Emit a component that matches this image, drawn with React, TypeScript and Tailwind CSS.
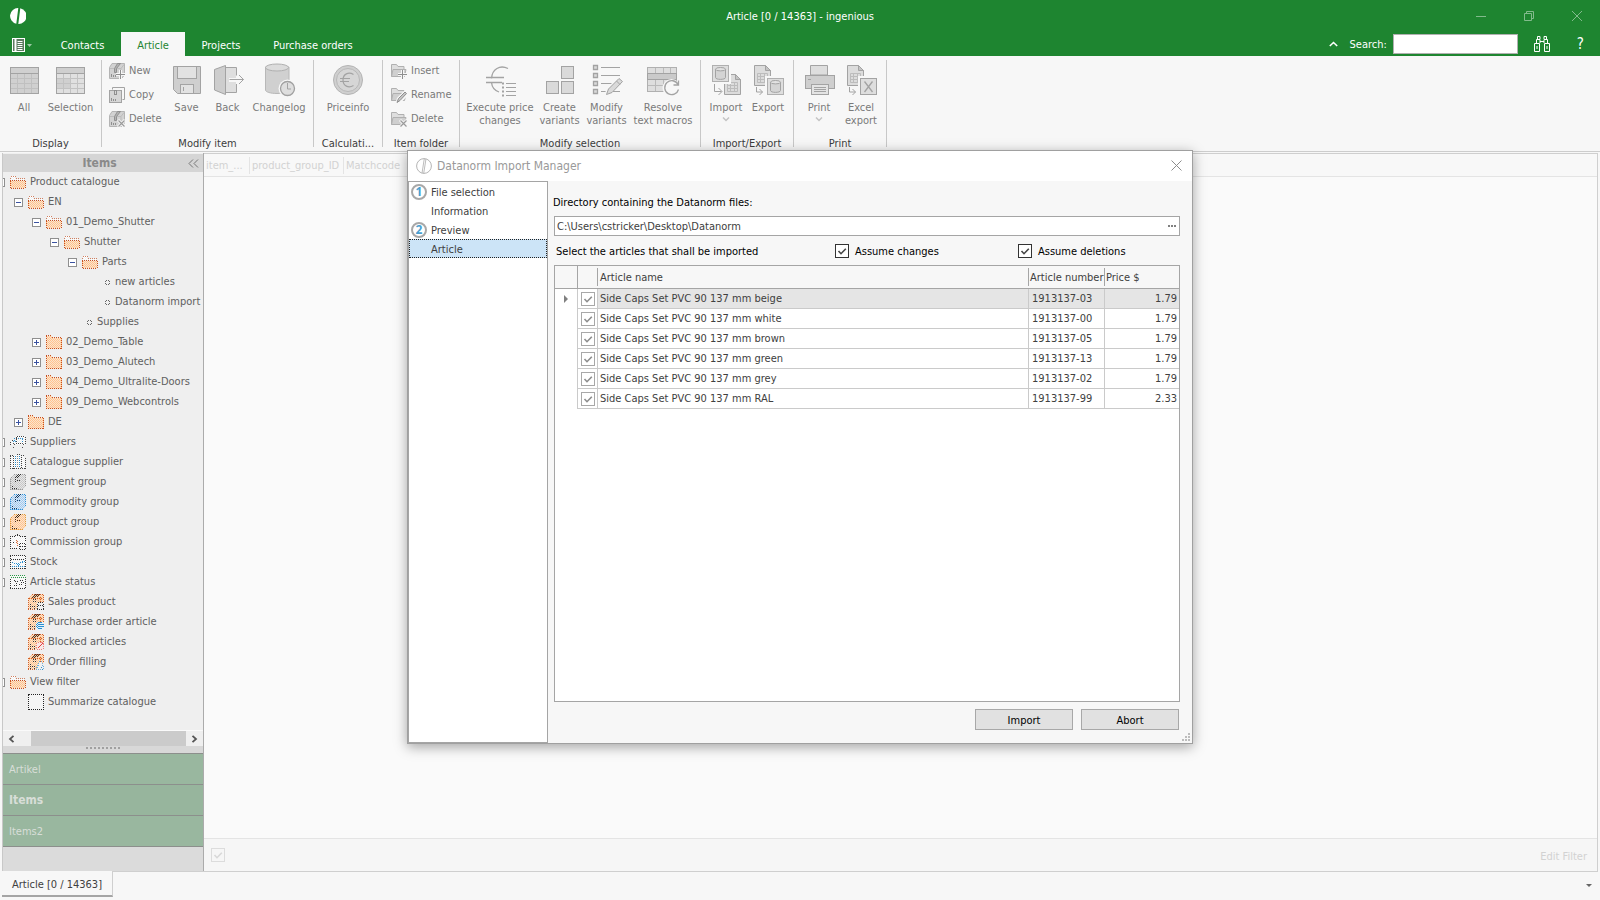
import { useState } from 'react';
import type { ReactNode } from 'react';

type TreeNode = {
  label: string;
  level: number;
  icon: string;
  toggle?: 'open' | 'closed';
};

const tree: TreeNode[] = [
  { label: 'Product catalogue', level: 0, icon: 'folderOpen', toggle: 'open' },
  { label: 'EN', level: 1, icon: 'folderOpen', toggle: 'open' },
  { label: '01_Demo_Shutter', level: 2, icon: 'folderOpen', toggle: 'open' },
  { label: 'Shutter', level: 3, icon: 'folderOpen', toggle: 'open' },
  { label: 'Parts', level: 4, icon: 'folderOpen', toggle: 'open' },
  { label: 'new articles', level: 5, icon: 'dot' },
  { label: 'Datanorm import', level: 5, icon: 'dot' },
  { label: 'Supplies', level: 4, icon: 'dot' },
  { label: '02_Demo_Table', level: 2, icon: 'folder', toggle: 'closed' },
  { label: '03_Demo_Alutech', level: 2, icon: 'folder', toggle: 'closed' },
  { label: '04_Demo_Ultralite-Doors', level: 2, icon: 'folder', toggle: 'closed' },
  { label: '09_Demo_Webcontrols', level: 2, icon: 'folder', toggle: 'closed' },
  { label: 'DE', level: 1, icon: 'folder', toggle: 'closed' },
  { label: 'Suppliers', level: 0, icon: 'truck', toggle: 'closed' },
  { label: 'Catalogue supplier', level: 0, icon: 'books', toggle: 'closed' },
  { label: 'Segment group', level: 0, icon: 'boxGray', toggle: 'closed' },
  { label: 'Commodity group', level: 0, icon: 'boxBlue', toggle: 'closed' },
  { label: 'Product group', level: 0, icon: 'boxOrange', toggle: 'closed' },
  { label: 'Commission group', level: 0, icon: 'clipboard', toggle: 'closed' },
  { label: 'Stock', level: 0, icon: 'stock', toggle: 'closed' },
  { label: 'Article status', level: 0, icon: 'status', toggle: 'closed' },
  { label: 'Sales product', level: 1, icon: 'boxSales' },
  { label: 'Purchase order article', level: 1, icon: 'boxGlobe' },
  { label: 'Blocked articles', level: 1, icon: 'boxBlocked' },
  { label: 'Order filling', level: 1, icon: 'boxPerson' },
  { label: 'View filter', level: 0, icon: 'folderOpen', toggle: 'open' },
  { label: 'Summarize catalogue', level: 1, icon: 'check' },
];

const articles = [
  { name: 'Side Caps Set PVC 90 137 mm beige', number: '1913137-03', price: '1.79' },
  { name: 'Side Caps Set PVC 90 137 mm white', number: '1913137-00', price: '1.79' },
  { name: 'Side Caps Set PVC 90 137 mm brown', number: '1913137-05', price: '1.79' },
  { name: 'Side Caps Set PVC 90 137 mm green', number: '1913137-13', price: '1.79' },
  { name: 'Side Caps Set PVC 90 137 mm grey', number: '1913137-02', price: '1.79' },
  { name: 'Side Caps Set PVC 90 137 mm RAL', number: '1913137-99', price: '2.33' },
];

/* ---------- icons ---------- */

const Big = ({ children }: { children: ReactNode }) => (
  <svg width="32" height="32" viewBox="0 0 32 32" fill="#dadada" stroke="#a3a3a3" className="overflow-visible">
    {children}
  </svg>
);

const Small = ({ children }: { children: ReactNode }) => (
  <svg width="16" height="16" viewBox="0 0 16 16" fill="#d6d6d6" stroke="#a3a3a3" className="shrink-0 overflow-visible">
    {children}
  </svg>
);

const AllIcon = () => (
  <Big>
    <rect x="2.5" y="3.5" width="28" height="26" fill="#d0d0d0" />
    <path d="M2.5 9.5h28" />
    <path d="M9.5 10v19M16.5 10v19M23.5 10v19M3 14.5h27M3 19.5h27M3 24.5h27" stroke="#c0c0c0" />
  </Big>
);

const SelectionIcon = () => (
  <Big>
    <rect x="1.5" y="3.5" width="28" height="26" fill="#e0e0e0" />
    <rect x="1.5" y="3.5" width="28" height="6" fill="#cfcfcf" />
    <rect x="2" y="15" width="13" height="9" fill="#d0d0d0" stroke="none" />
    <path d="M8.5 10v19M15.5 10v19M22.5 10v19M2 14.5h27M2 19.5h27M2 24.5h27" stroke="#c2c2c2" />
  </Big>
);

const SaveIcon = () => (
  <Big>
    <path d="M2.5 2.5h27v27H6.5l-4-4z" fill="#cfcfcf" />
    <rect x="6.5" y="2.5" width="19" height="12" fill="#e2e2e2" />
    <rect x="9.5" y="20.5" width="13" height="9" fill="#e2e2e2" />
    <path d="M12.5 23v4" />
  </Big>
);

const BackIcon = () => (
  <Big>
    <path d="M14 4h10v24H14z" fill="#dedede" stroke="none" />
    <path d="M14 3.5h10.500v8M24.500 20v8.500H14" fill="none" />
    <path d="M2.500 5.500L13.500 1.500v29L2.500 26z" fill="#cdcdcd" />
    <path d="M17 16h14" stroke="#f7f7f7" strokeWidth="4" />
    <path d="M17.500 15.500h14M27 11l4.500 4.500L27 20" fill="none" />
  </Big>
);

const ChangelogIcon = () => (
  <Big>
    <path d="M2.5 3v23c0 2 5 3.500 11.500 3.500s12-1.500 12-3.500V3z" fill="#d0d0d0" stroke="#b8b8b8" />
    <ellipse cx="14" cy="3.500" rx="11.500" ry="3.500" fill="#dcdcdc" stroke="#b0b0b0" />
    <circle cx="24.500" cy="24.500" r="9" fill="#f7f7f7" stroke="none" />
    <circle cx="24.500" cy="24.500" r="7" fill="#dedede" stroke="#a0a0a0" strokeWidth="1.300" />
    <path d="M24.500 19v6h3.500" fill="none" />
  </Big>
);

const PriceIcon = () => (
  <Big>
    <circle cx="16" cy="16" r="14.500" fill="#cfcfcf" stroke="#b4b4b4" />
    <circle cx="16" cy="16" r="11.500" fill="#d6d6d6" stroke="#b8b8b8" />
    <path d="M21.500 10.500c-5-3-10.500-.5-10.500 5.500s5.500 8.500 10.500 5.500M8 14.500h10M8 17.500h9" fill="none" strokeWidth="1.200" />
  </Big>
);

const ExecuteIcon = () => (
  <Big>
    <path d="M24 4.500C16 .5 8 5 7.500 14.500M2 13.500h18M2 18.500h16M7.500 18.500c.5 5 3 8 7.500 9.500" fill="none" strokeWidth="1.300" />
    <path d="M18 19.500h2M18 23.500h2M18 27.500h2M18 31.500h2" strokeWidth="2" />
    <path d="M22 19.500h10M22 23.500h10M22 27.500h10M22 31.500h10" />
  </Big>
);

const CreateIcon = () => (
  <Big>
    <rect x="17.500" y="2.500" width="12" height="12" />
    <rect x="2.500" y="17.500" width="12" height="12" />
    <rect x="17.500" y="17.500" width="12" height="12" />
  </Big>
);

const ModifyIcon = () => (
  <Big>
    <path d="M2.500 1.500h4v4h-4zM2.500 9.500h4v4h-4zM2.500 17.500h4v4h-4zM2.500 25.500h4v4h-4z" strokeWidth="1.300" />
    <path d="M10 3.500h19M10 11.500h19M10 19.500h13M10 27.500h6" />
    <path d="M15 31l2-6L28 14l4 4-11.500 11z" fill="#cfcfcf" stroke="#f7f7f7" strokeWidth="3" />
    <path d="M15.500 30.500l2-5.500L28 14.500l3.500 3L21 28.500zM25.500 17l3.500 3.500" />
    <path d="M22 27.500h7" />
  </Big>
);

const ResolveIcon = () => (
  <Big>
    <rect x=".5" y="3.500" width="29" height="24" fill="#dedede" stroke="#b0b0b0" />
    <path d="M8.500 4v23M16.500 4v23M23.500 4v23M1 21.500h28" stroke="#bababa" />
    <rect x=".5" y="9.500" width="29" height="6" fill="#cacaca" />
    <circle cx="24.500" cy="24" r="9" fill="#f7f7f7" stroke="none" />
    <path d="M31 20.500a7 7 0 1 0 .5 5M31.500 16.500v4.500h-5" fill="none" strokeWidth="1.300" />
  </Big>
);

const Db = ({ x, y }: { x: number; y: number }) => (
  <g transform={`translate(${x} ${y})`}>
    <rect x=".5" y=".5" width="16" height="16" fill="#dedede" stroke="#b0b0b0" />
    <path d="M3.500 4v8.500c0 2.500 10 2.500 10 0V4" fill="#d4d4d4" />
    <ellipse cx="8.500" cy="4.200" rx="5" ry="1.700" fill="#e2e2e2" />
  </g>
);

const Sheet = ({ x, y }: { x: number; y: number }) => (
  <g transform={`translate(${x} ${y})`}>
    <path d="M.5.500h11l5 5v15H.500z" fill="#dcdcdc" />
    <path d="M11.500.5v5h5z" fill="#c4c4c4" />
    <path d="M3.500 8.500h10v9h-10zM3.500 11.500h10M3.500 14.500h10M6.500 8.500v9M10.500 8.500v9" fill="none" stroke="#bcbcbc" />
  </g>
);

const ImportIcon = () => (
  <Big>
    <Sheet x={14} y={10} />
    <rect x="1" y="0" width="20" height="20" fill="#f7f7f7" stroke="none" />
    <Db x={2} y={1} />
    <path d="M4.500 20v7.500h7M8.500 24l3.500 3.500L8.500 31" fill="none" />
  </Big>
);

const ExportIcon = () => (
  <Big>
    <Sheet x={2} y={1} />
    <rect x="13" y="12" width="19" height="20" fill="#f7f7f7" stroke="none" />
    <Db x={15} y={14} />
    <path d="M4.500 23v5h6M7.500 25l3 3-3 3" fill="none" />
  </Big>
);

const PrintIcon = () => (
  <Big>
    <path d="M7.500 11V1.500h17V11z" fill="#dedede" />
    <rect x="2.500" y="11.500" width="29" height="13" fill="#cfcfcf" />
    <rect x="8.500" y="20.500" width="17" height="10" fill="#e4e4e4" />
    <path d="M11 23.500h12M11 25.500h12M11 27.500h12M5 15.500h3" />
  </Big>
);

const ExcelIcon = () => (
  <Big>
    <Sheet x={2} y={1} />
    <rect x="13" y="12" width="19" height="20" fill="#f7f7f7" stroke="none" />
    <rect x="15.500" y="14.500" width="16" height="16" fill="#dedede" />
    <path d="M19.500 17.500l8 10.500M27.500 17.500l-8 10.500" strokeWidth="1.300" />
    <path d="M4.500 23v5h6M7.500 25l3 3-3 3" fill="none" />
  </Big>
);

const PackagePlain = () => (
  <>
    <path d="M.5 15.500V4.500l2.500-4h12.500V12l-3 3.500z" fill="#d2d2d2" stroke="#b4b4b4" />
    <path d="M1 5.500h11V15M12 5.500l3-4" fill="none" stroke="#bcbcbc" />
    <path d="M5.500 5.500v4h2v-4l4-5h-3z" fill="#b4b4b4" stroke="#909090" />
    <path d="M2.500 11v3M4.500 12v2M6.500 12v2" stroke="#8f8f8f" />
  </>
);

const NewIcon = () => (
  <Small>
    <PackagePlain />
    <path d="M7 11.500h9M11.500 7v9" stroke="#f7f7f7" strokeWidth="3" />
    <path d="M7 11.500h9M11.500 7v9" stroke="#8f8f8f" />
  </Small>
);

const CopyIcon = () => (
  <Small>
    <path d="M3.500 2.500V.500h12v12h-2" fill="none" />
    <rect x=".5" y="3.500" width="12" height="12" />
    <rect x="5.500" y="3.500" width="2" height="4" stroke="#8f8f8f" />
    <path d="M2.500 11v3M4.500 12v2M6.500 12v2" stroke="#8f8f8f" />
  </Small>
);

const DeleteIcon = () => (
  <Small>
    <PackagePlain />
    <path d="M9 9l7 7M16 9l-7 7" stroke="#f7f7f7" strokeWidth="3" />
    <path d="M9.500 9.500l6 6M15.500 9.500l-6 6" stroke="#9a9a9a" strokeWidth="1.200" />
  </Small>
);

const FolderShape = () => (
  <>
    <path d="M.5 13.500V1.500h5l1.500 2h6v3" fill="#dedede" stroke="#b0b0b0" />
    <path d="M.5 13.500l1.500-7h13l-1.500 7z" fill="#cfcfcf" stroke="#b0b0b0" />
  </>
);

const FolderInsert = () => (
  <Small>
    <FolderShape />
    <path d="M7 11.500h9M11.500 7v9" stroke="#f7f7f7" strokeWidth="3" />
    <path d="M7 11.500h9M11.500 7v9" stroke="#8f8f8f" />
  </Small>
);

const FolderRename = () => (
  <Small>
    <FolderShape />
    <path d="M6 15.500l1.500-4 6.500-6.500 2 2-6.500 7z" stroke="#f7f7f7" strokeWidth="3" />
    <path d="M6 15.500l1.500-4 6.500-6.500 1.500 1.500-6.500 7z" fill="#c4c4c4" stroke="#8f8f8f" />
  </Small>
);

const FolderDelete = () => (
  <Small>
    <FolderShape />
    <path d="M9 9l7 7M16 9l-7 7" stroke="#f7f7f7" strokeWidth="3" />
    <path d="M9.500 9.500l6 6M15.500 9.500l-6 6" stroke="#9a9a9a" strokeWidth="1.200" />
  </Small>
);

const Logo = () => (
  <svg width="16" height="16" viewBox="0 0 16 16" fill="#fff" className="shrink-0">
    <path d="M8.300 0A8 8 0 0 0 6.300 15.800z" />
    <path d="M7.700 16A8 8 0 0 0 9.700 .200z" transform="translate(.6 0)" />
  </svg>
);

const LogoOutline = () => (
  <svg width="16" height="16" viewBox="0 0 16 16" fill="none" stroke="#b4b4b4" className="shrink-0">
    <circle cx="8" cy="8" r="7.400" />
    <path d="M8.300 .6L6 15.200M10 .8L7.700 15.400" strokeWidth=".9" />
  </svg>
);

// dithered fills shared by the tree icons
const Patterns = () => (
  <svg width="0" height="0" className="absolute" aria-hidden="true">
    <defs>
      {[
        ['orange', '#ffc490', '#fbe3cd'],
        ['blue', '#a0c8ee', '#dce9f5'],
        ['gray', '#c8c8c8', '#e6e6e6'],
        ['white', '#ffffff', '#f0f0f0'],
      ].map(([id, color, base]) => (
        <pattern key={id} id={`d-${id}`} width="2" height="2" patternUnits="userSpaceOnUse">
          <path d="M0 0h2v2H0z" fill={base} />
          <path d="M0 0h1v1H0zM1 1h1v1H1z" fill={color} />
        </pattern>
      ))}
    </defs>
  </svg>
);

const Package = ({ stroke, fill, dark }: { stroke: string; fill: string; dark: string }) => (
  <>
    <path d="M0 4l4-4h12v12l-3 4H0z" fill={fill} stroke="none" />
    <path d="M.5 5v11M2 15.500h11M4 .5h12M15.500 1v12M1 3.500h2" stroke={stroke} />
    <path d="M8 .5h3M7 1.500h3M6 2.500h3M5 3.500h3M5.500 5v3M7 6.500h3M2 12.500h2M2 14.500h6" stroke={dark} />
  </>
);

const SmallPackage = ({ children }: { children: ReactNode }) => (
  <>
    <path d="M0 4l4-4h12v8l-5 7H0z" fill="url(#d-orange)" stroke="none" />
    <path d="M.5 4v12M0 15.500h8M4 .5h12M15.500 1v8M1 4.500h13M12.500 3v5" stroke="#d0602a" />
    <path d="M7 .5h5M6 1.500h5M5 2.500h5M4 3.500h3M5.500 5v3M7.500 5v3M2.500 10v5M4 12.500h3M6 14.500h2" stroke="#3f3530" />
    {children}
  </>
);

const treeIcons: Record<string, ReactNode> = {
  folderOpen: (
    <>
      <path d="M1 6V2h4v2h9v2z" fill="url(#d-white)" stroke="none" />
      <path d="M1 2.500h5M6 4.500h8M.5 4v2M14.500 4v2" stroke="#d08060" />
      <path d="M0 7h16l-1 7H1z" fill="url(#d-orange)" stroke="none" />
      <path d="M0 6.500h16M1 14.500h14M.5 7v7M15.500 7v7" stroke="#c8501e" />
    </>
  ),
  folder: (
    <>
      <path d="M0 2h6v2h10v11H0z" fill="url(#d-orange)" stroke="none" />
      <path d="M0 1.500h6M6 3.500h10M.5 2v12M15.500 4v11M0 14.500h16" stroke="#c8501e" />
    </>
  ),
  truck: (
    <>
      <path d="M6 2h9v9H6zM1 6h5v5H1z" fill="url(#d-white)" stroke="none" />
      <path d="M7 2.500h8M15.500 3v8M6.500 3v6M4 4.500h3M2 6.500h2M.5 8v3M6 9.500h8" stroke="#444" />
      <path d="M8 4.500h6M12.500 5v3M3 7.500h3M4.500 4v4" stroke="#2a90d0" />
      <path d="M1.500 11.500l2-2 2 2-2 2zM10.500 11.500l2-2 2 2-2 2z" stroke="#555" />
    </>
  ),
  books: (
    <>
      <path d="M0 2h5V1h6l4 2v12H0z" fill="url(#d-white)" stroke="none" />
      <path d="M.5 2v13M3.500 2v13M11.500 1v14M15.500 4v11M0 1.500h4M11 1.500h3M0 14.500h15M7 .5h4" stroke="#444" />
      <path d="M5.500 2v12M9.500 2v12" stroke="#2a90d0" />
      <path d="M7.500 2v12" stroke="#888" />
    </>
  ),
  boxGray: <Package stroke="#999" fill="url(#d-gray)" dark="#333" />,
  boxBlue: <Package stroke="#2a90d8" fill="url(#d-blue)" dark="#123a66" />,
  boxOrange: <Package stroke="#dc9a3c" fill="url(#d-orange)" dark="#4a2a10" />,
  clipboard: (
    <>
      <path d="M0 2h16v13H0z" fill="url(#d-white)" stroke="none" />
      <path d="M.5 2v13M15.500 2v6M0 2.500h5M10 2.500h6M5 1.500h6M7 .5h2M0 14.500h8M3 8.500h2" stroke="#333" />
      <path d="M6.500 6v4M7.500 7v5" stroke="#e0703a" />
      <path d="M10 9.500h5M9.500 10v6M15.500 10v6M10 12.500h5M10 15.500h5" stroke="#333" />
    </>
  ),
  stock: (
    <>
      <path d="M0 2h16v13H0z" fill="url(#d-white)" stroke="none" />
      <path d="M0 1.500h16M0 14.500h16M.5 2v13M15.500 2v13M1 5.500h14" stroke="#333" />
      <path d="M2 8.500h2M4 9.500h3M7 10.500h3M10 8.500h3M12 7.500h3M2 12.500h13M8.500 9v4" stroke="#2a90d0" />
    </>
  ),
  status: (
    <>
      <path d="M0 2h16v13H0z" fill="url(#d-white)" stroke="none" />
      <path d="M0 14.500h16M.5 5v10M15.500 5v10M4 6.500h2M5 7.500h3M6 9.500h2M4 11.500h3M10 6.500h3M11 8.500h3M9 10.500h4" stroke="#333" />
      <path d="M0 1.500h16M1 3.500h15" stroke="#2a9a48" />
    </>
  ),
  boxSales: (
    <SmallPackage>
      <path d="M9 9h7v7H9z" fill="#f0f0f0" stroke="none" />
      <path d="M10 8.500h5M9.500 10v6M15.500 10v6M10 11.500h5M9 15.500h7" stroke="#333" />
    </SmallPackage>
  ),
  boxGlobe: (
    <SmallPackage>
      <circle cx="12" cy="12" r="4.500" fill="#e4f1fa" stroke="none" />
      <path d="M10 8.500h4M8 10.500h8M8 12.500h8M10 14.500h4M9.500 9v6M11.500 8v8M13.500 8v8M15.500 10v4" stroke="#2a90d0" />
    </SmallPackage>
  ),
  boxBlocked: (
    <SmallPackage>
      <circle cx="12" cy="12" r="4" fill="#f8e8e6" stroke="#f08080" />
      <path d="M9.500 14.500l5-5" stroke="#e04040" strokeDasharray="none" />
    </SmallPackage>
  ),
  boxPerson: (
    <SmallPackage>
      <path d="M8 15.500l2.500-5 1-3h2l1 3 1.500 5z" fill="#f0f0f0" stroke="#6ab0dc" />
      <path d="M13 13.500h2M14 15.500h2" stroke="#2a90d0" />
    </SmallPackage>
  ),
};

const TreeIcon = ({ name }: { name: string }) => (
  <svg
    width="16"
    height="16"
    viewBox="0 0 16 16"
    fill="none"
    strokeDasharray="1 1"
    shapeRendering="crispEdges"
    className="shrink-0"
  >
    {treeIcons[name]}
  </svg>
);

const LeafDot = () => (
  <svg width="5" height="5" viewBox="0 0 5 5" fill="#666" shapeRendering="crispEdges" className="mx-[5px] shrink-0">
    <path d="M1 0h1v1H1zM3 0h1v1H3zM0 1h1v1H0zM4 1h1v1H4zM0 3h1v1H0zM4 3h1v1H4zM1 4h1v1H1zM3 4h1v1H3z" />
  </svg>
);

const Tick = ({ className }: { className: string }) => (
  <svg viewBox="0 0 14 14" fill="none" strokeWidth="1.600" className={`pointer-events-none absolute inset-0 ${className}`}>
    <path d="M3.500 7l2.500 2.700 4.800-5" />
  </svg>
);

/* ---------- controls ---------- */

type CheckBoxProps = {
  id: string;
  label?: string;
  box: string;
  tick: string;
  disabled?: boolean;
};

const CheckBox = ({ id, label, box, tick, disabled }: CheckBoxProps) => {
  const [checked, setChecked] = useState(true);
  return (
    <span className="relative block size-3.5 shrink-0">
      <input
        type="checkbox"
        id={id}
        aria-label={label}
        checked={checked}
        disabled={disabled}
        onChange={(e) => setChecked(e.target.checked)}
        className={`block size-3.5 appearance-none border ${box}`}
      />
      {checked && <Tick className={tick} />}
    </span>
  );
};

const BigButton = ({ icon, lines, width, arrow }: { icon: ReactNode; lines: string[]; width: string; arrow?: boolean }) => (
  <button className={`flex flex-col items-center whitespace-nowrap pt-2 leading-[13px] text-[#7a7a7a] ${width}`}>
    {icon}
    <span className="mt-[5px]">
      {lines.map((line) => (
        <span key={line} className="block">{line}</span>
      ))}
    </span>
    {arrow && (
      <svg width="8" height="5" viewBox="0 0 8 5" fill="none" stroke="#c4c4c4" strokeWidth="1.500" className="mt-[3px]">
        <path d="M1 .5l3 3 3-3" />
      </svg>
    )}
  </button>
);

const SmallButton = ({ icon, label }: { icon: ReactNode; label: string }) => (
  <button className="flex h-6 items-center gap-1 text-[#7a7a7a]">
    {icon}
    {label}
  </button>
);

const Group = ({ caption, width, children }: { caption: string; width: string; children: ReactNode }) => (
  <section className={`flex shrink-0 flex-col ${width}`}>
    <div className="mt-1 flex h-[87px] flex-col border-r border-[#c8c8c8]">
      <div className="-mt-1 flex flex-1 justify-center">{children}</div>
      <h2 className="text-center leading-[7px] text-[#3c3c3c]">{caption}</h2>
    </div>
  </section>
);

const Ribbon = () => (
  <div className="flex h-24 shrink-0 overflow-hidden border-b border-[#cdcdcd] bg-[#f7f7f7]">
    <Group caption="Display" width="w-[102px]">
      <BigButton icon={<AllIcon />} lines={['All']} width="ml-2 w-8" />
      <BigButton icon={<SelectionIcon />} lines={['Selection']} width="w-[62px]" />
    </Group>
    <Group caption="Modify item" width="w-[212px]">
      <div className="flex w-[61px] flex-col pt-[3px] pl-1">
        <SmallButton icon={<NewIcon />} label="New" />
        <SmallButton icon={<CopyIcon />} label="Copy" />
        <SmallButton icon={<DeleteIcon />} label="Delete" />
      </div>
      <BigButton icon={<SaveIcon />} lines={['Save']} width="w-[41px]" />
      <BigButton icon={<BackIcon />} lines={['Back']} width="w-[41px]" />
      <BigButton icon={<ChangelogIcon />} lines={['Changelog']} width="w-[62px]" />
    </Group>
    <Group caption="Calculati..." width="w-[69px]">
      <BigButton icon={<PriceIcon />} lines={['Priceinfo']} width="w-[66px]" />
    </Group>
    <Group caption="Item folder" width="w-[77px]">
      <div className="flex w-full flex-col pt-[3px] pl-2">
        <SmallButton icon={<FolderInsert />} label="Insert" />
        <SmallButton icon={<FolderRename />} label="Rename" />
        <SmallButton icon={<FolderDelete />} label="Delete" />
      </div>
    </Group>
    <Group caption="Modify selection" width="w-[241px]">
      <BigButton icon={<ExecuteIcon />} lines={['Execute price', 'changes']} width="w-[72px]" />
      <BigButton icon={<CreateIcon />} lines={['Create', 'variants']} width="w-[47px]" />
      <BigButton icon={<ModifyIcon />} lines={['Modify', 'variants']} width="w-[47px]" />
      <BigButton icon={<ResolveIcon />} lines={['Resolve', 'text macros']} width="w-[66px]" />
    </Group>
    <Group caption="Import/Export" width="w-[93px]">
      <BigButton icon={<ImportIcon />} lines={['Import']} width="w-[42px]" arrow />
      <BigButton icon={<ExportIcon />} lines={['Export']} width="w-[42px]" />
    </Group>
    <Group caption="Print" width="w-[93px]">
      <BigButton icon={<PrintIcon />} lines={['Print']} width="w-[42px]" arrow />
      <BigButton icon={<ExcelIcon />} lines={['Excel', 'export']} width="w-[42px]" />
    </Group>
  </div>
);

const Header = () => (
  <header className="shrink-0 bg-[#1e8530] text-white">
    <div className="flex h-8 items-center px-2.5">
      <div className="flex-1">
        <Logo />
      </div>
      <h1 className="pt-0.5">Article [0 / 14363] - ingenious</h1>
      <div className="flex flex-1 items-center justify-end gap-[38px] text-[#82bb8c]">
        <button aria-label="Minimize">
          <svg width="10" height="10" viewBox="0 0 10 10" stroke="currentColor"><path d="M0 5.500h10" /></svg>
        </button>
        <button aria-label="Restore">
          <svg width="10" height="10" viewBox="0 0 10 10" fill="none" stroke="currentColor">
            <path d="M.5 2.500h7v7h-7zM2.500 2V.500h7v7H8" />
          </svg>
        </button>
        <button aria-label="Close" className="pr-2">
          <svg width="10" height="10" viewBox="0 0 10 10" stroke="currentColor"><path d="M0 0l10 10M10 0L0 10" /></svg>
        </button>
      </div>
    </div>
    <div className="flex h-6 items-stretch">
      <button aria-label="Application menu" className="flex w-11 items-center gap-0.5 pt-0.5 pl-3">
        <svg width="13" height="14" viewBox="0 0 13 14" fill="none" stroke="#fff">
          <rect x=".5" y=".5" width="12" height="13" fill="#5c7a60" />
          <path d="M3.500 1v12" strokeWidth="2" />
          <path d="M5.500 3.500h5M5.500 5.500h5M5.500 7.500h5M5.500 9.500h5M5.500 11.500h5" />
        </svg>
        <svg width="5" height="3" viewBox="0 0 5 3" fill="#9cc9a4"><path d="M0 0h5L2.500 3z" /></svg>
      </button>
      <nav className="flex flex-1">
        <a href="#contacts" className="flex w-[77px] items-center justify-center pt-[3px]">Contacts</a>
        <a href="#article" className="flex w-16 items-center justify-center bg-[#f7f7f7] pt-[3px] text-[#1e8530]">Article</a>
        <a href="#projects" className="flex w-[72px] items-center justify-center pt-[3px]">Projects</a>
        <a href="#orders" className="flex w-28 items-center justify-center pt-[3px]">Purchase orders</a>
      </nav>
      <div className="flex items-center pr-4">
        <button aria-label="Collapse ribbon" className="mr-3">
          <svg width="9" height="6" viewBox="0 0 9 6" fill="none" stroke="#fff" strokeWidth="1.600"><path d="M.8 5l3.700-3.500L8.200 5" /></svg>
        </button>
        <label htmlFor="search" className="mr-1.5 pt-0.5">Search:</label>
        <input id="search" type="text" className="h-5 w-[125px] border border-[#b0b0b0] bg-white px-1 text-black outline-none" />
        <button aria-label="Find" className="ml-4">
          <svg width="16" height="16" viewBox="0 0 16 16" fill="none" stroke="#fff">
            <path d="M.5 7.500h5v8h-5zM10.500 7.500h5v8h-5zM2.500 7V3.500h3.500V7M10 7V3.500h3.500V7M3.500 3V.500H6V3M10 3V.500h2.500V3M6 5.500h4M3 10v3M13 10v3" />
          </svg>
        </button>
        <button aria-label="Help" className="ml-[27px] text-[15px] leading-4">?</button>
      </div>
    </div>
  </header>
);

const TreeRow = ({ node }: { node: TreeNode }) => (
  <li className="flex h-5 items-center whitespace-nowrap" style={{ paddingLeft: node.level * 18 }}>
    {node.toggle ? (
      <button aria-label={node.toggle === 'open' ? 'Collapse' : 'Expand'} className="mr-[5px] shrink-0">
        <svg width="9" height="9" viewBox="0 0 9 9" fill="#fff" stroke="#8f8f8f">
          <rect x=".5" y=".5" width="8" height="8" />
          <path d={node.toggle === 'open' ? 'M2 4.500h5' : 'M2 4.500h5M4.500 2v5'} stroke="#3a52a0" />
        </svg>
      </button>
    ) : (
      <span className="mr-[5px] w-[9px] shrink-0" />
    )}
    {node.icon === 'dot' && (
      <>
        <LeafDot />
        {node.label}
      </>
    )}
    {node.icon === 'check' && (
      <>
        <input type="checkbox" id="summarize" className="size-4 appearance-none border border-dotted border-[#222] bg-[#f5f5f5]" />
        <label htmlFor="summarize" className="ml-1">{node.label}</label>
      </>
    )}
    {node.icon !== 'dot' && node.icon !== 'check' && (
      <>
        <TreeIcon name={node.icon} />
        <span className="ml-1">{node.label}</span>
      </>
    )}
  </li>
);

const Sidebar = () => (
  <aside className="flex w-[202px] shrink-0 flex-col border-r border-l border-r-[#ababab] border-l-[#c8c8c8] bg-[#efefef]">
    <div className="mt-px flex h-[18px] items-center bg-[#d5d5d5]">
      <h2 className="flex-1 pl-2 text-center text-[12px] font-bold text-[#8a8a8a]">Items</h2>
      <button aria-label="Collapse panel" className="pr-1">
        <svg width="11" height="9" viewBox="0 0 11 9" fill="none" stroke="#777"><path d="M5 .5l-4 4 4 4M10 .5l-4 4 4 4" /></svg>
      </button>
    </div>
    <div className="flex-1 overflow-hidden text-[#606060]">
      <ul className="-ml-[7px]">
        {tree.map((node) => (
          <TreeRow key={node.label} node={node} />
        ))}
      </ul>
    </div>
    <div className="flex h-4 items-stretch border-t border-[#fafafa]">
      <button aria-label="Scroll left" className="flex w-7 items-center pl-[5px]">
        <svg width="7" height="8" viewBox="0 0 7 8" fill="none" stroke="#555" strokeWidth="1.800"><path d="M5.500 .8L2 4l3.500 3.200" /></svg>
      </button>
      <div className="flex-1 bg-[#cbcbcb]" />
      <button aria-label="Scroll right" className="flex w-[17px] items-center pl-[5px]">
        <svg width="7" height="8" viewBox="0 0 7 8" fill="none" stroke="#555" strokeWidth="1.800"><path d="M1.500 .8L5 4 1.500 7.200" /></svg>
      </button>
    </div>
    <div className="flex h-[7px] items-start justify-center bg-[#d8d8d8] pt-px">
      <svg width="34" height="2" viewBox="0 0 34 2"><path d="M0 1h34" stroke="#a0a0a0" strokeWidth="2" strokeDasharray="2 2" /></svg>
    </div>
    <nav className="border-t border-[#8c8f8c] text-[#d8ded8]">
      <a href="#artikel" className="flex h-[31px] items-center border-b border-[#8c8f8c] bg-[#99b79f] pt-0.5 pl-1.5">Artikel</a>
      <a href="#items" className="flex h-[31px] items-center border-b border-[#8c8f8c] bg-[#97b59d] pl-1.5 text-[12px] font-bold">Items</a>
      <a href="#items2" className="flex h-[31px] items-center border-b border-[#8c8f8c] bg-[#99b79f] pt-0.5 pl-1.5">Items2</a>
    </nav>
    <div className="h-6 bg-[#dbdbdb]" />
  </aside>
);

const Grid = () => (
  <section className="mr-0.5 flex flex-1 flex-col border-t border-r border-[#cfcfcf] bg-[#fafafa] text-[#d2d2d2]">
    <table className="w-full table-fixed border-separate border-spacing-0 text-left">
      <thead>
        <tr className="h-[23px] bg-[#f8f8f8] leading-4">
          <th className="w-[46px] border-b border-[#e4e4e4] p-0 font-normal"><div className="border-r border-[#e4e4e4] pt-px pl-0.5">item_...</div></th>
          <th className="w-[94px] border-b border-[#e4e4e4] p-0 font-normal"><div className="border-r border-[#e4e4e4] pt-px pl-0.5">product_group_ID</div></th>
          <th className="border-b border-[#e4e4e4] p-0 font-normal"><div className="pt-px pl-0.5">Matchcode</div></th>
        </tr>
      </thead>
    </table>
    <div className="flex-1" />
    <div className="flex h-[33px] items-center justify-between border-t border-[#e4e4e4] bg-[#f6f6f6] pr-2.5 pl-[7px]">
      <CheckBox id="filter-on" label="Filter active" box="border-[#dcdcdc]" tick="stroke-[#d8d8d8]" disabled />
      <button className="pt-[3px]">Edit Filter</button>
    </div>
  </section>
);

const steps = [
  { label: 'File selection', number: '1' },
  { label: 'Information' },
  { label: 'Preview', number: '2' },
  { label: 'Article', active: true },
];

const StepList = () => (
  <ol className="w-[140px] shrink-0 border border-[#a5a5a5] bg-white text-[#404040]">
    {steps.map((step) => (
      <li key={step.label}>
        <button
          className={`flex h-[19px] w-full items-center gap-1 border border-dotted pl-px ${
            step.active ? 'border-[#222] bg-[#cce4f7]' : 'border-transparent'
          }`}
        >
          {step.number ? (
            <span className="flex size-4 items-center justify-center rounded-full border-2 border-[#a8a8a8] font-sans text-[12px] leading-3 font-bold text-[#4a9fd0]">
              {step.number}
            </span>
          ) : (
            <span className="w-4" />
          )}
          <span className="pt-0.5">{step.label}</span>
        </button>
      </li>
    ))}
  </ol>
);

const ArticleTable = () => (
  <div className="min-h-[437px] border border-[#a5a5a5] bg-white text-[#404040]">
    <table className="w-full table-fixed border-separate border-spacing-0 text-left">
      <colgroup>
        <col className="w-[22px]" />
        <col className="w-5" />
        <col />
        <col className="w-[76px]" />
        <col className="w-[75px]" />
      </colgroup>
      <thead>
        <tr className="h-[23px] bg-[#f7f7f7] leading-4 whitespace-nowrap">
          <th className="border-b border-[#a5a5a5] p-0" aria-label="Current row" />
          <th className="border-b border-l border-[#a5a5a5] p-0" aria-label="Selected" />
          <th className="border-b border-[#a5a5a5] p-0 font-normal"><div className="border-l border-[#a5a5a5] pt-0.5 pl-0.5">Article name</div></th>
          <th className="border-b border-[#a5a5a5] p-0 font-normal"><div className="border-l border-[#a5a5a5] pt-0.5 pl-px">Article number</div></th>
          <th className="border-b border-[#a5a5a5] p-0 font-normal"><div className="border-l border-[#a5a5a5] pt-0.5 pl-px">Price $</div></th>
        </tr>
      </thead>
      <tbody>
        {articles.map((article, i) => (
          <tr key={article.number} className="h-5 leading-[14px]">
            <td className="p-0">
              {i === 0 && (
                <svg width="4" height="8" viewBox="0 0 4 8" fill="#808080" className="ml-[9px]"><path d="M0 0l4 4-4 4z" /></svg>
              )}
            </td>
            <td className="border-b border-l border-[#cacaca] p-0 pl-[3px]">
              <CheckBox id={`row-${i}`} label={article.name} box="border-[#a8a8a8] bg-white" tick="stroke-[#8c8c8c]" />
            </td>
            <td className={`border-b border-l border-[#cacaca] p-0 pl-0.5 ${i === 0 ? 'bg-[#e5e5e5]' : ''}`}>{article.name}</td>
            <td className={`border-b border-l border-[#cacaca] p-0 pl-[3px] ${i === 0 ? 'bg-[#e5e5e5]' : ''}`}>{article.number}</td>
            <td className={`border-b border-l border-[#cacaca] p-0 pr-0.5 text-right ${i === 0 ? 'bg-[#e5e5e5]' : ''}`}>{article.price}</td>
          </tr>
        ))}
      </tbody>
    </table>
  </div>
);

const ImportDialog = () => {
  const [path, setPath] = useState('C:\\Users\\cstricker\\Desktop\\Datanorm');

  return (
    <div
      role="dialog"
      aria-labelledby="dialog-title"
      className="absolute top-[150px] left-1/2 w-[786px] -translate-x-1/2 border border-[#a0a0a0] bg-[#f7f7f7] shadow-[0_3px_12px_rgba(0,0,0,0.35)]"
    >
      <div className="flex h-[30px] items-center bg-white pr-2.5 pl-2">
        <LogoOutline />
        <h2 id="dialog-title" className="ml-[5px] flex-1 text-[12px] text-[#999]">Datanorm Import Manager</h2>
        <button aria-label="Close dialog" className="pb-0.5">
          <svg width="11" height="11" viewBox="0 0 11 11" stroke="#8c8c8c"><path d="M.5 .5l10 10M10.500 .5l-10 10" /></svg>
        </button>
      </div>
      <div className="flex">
        <StepList />
        <div className="relative flex-1 pt-[15px] pr-3 pb-[13px] pl-1.5 text-black">
          <label htmlFor="directory" className="-ml-px block leading-[14px]">Directory containing the Datanorm files:</label>
          <div className="mt-1.5 flex h-5 items-center border border-[#a5a5a5] bg-white">
            <input
              id="directory"
              type="text"
              value={path}
              onChange={(e) => setPath(e.target.value)}
              className="min-w-0 flex-1 px-0.5 pt-px text-[#404040] outline-none"
            />
            <button aria-label="Browse" className="pr-[3px]">
              <svg width="8" height="2" viewBox="0 0 8 2" fill="#808080"><path d="M0 0h2v2H0zM3 0h2v2H3zM6 0h2v2H6z" /></svg>
            </button>
          </div>
          <div className="flex h-[29px] items-center">
            <span className="w-[281px] pt-0.5 pl-0.5">Select the articles that shall be imported</span>
            <span className="flex w-[183px] items-center gap-1.5">
              <CheckBox id="changes" box="border-[#333] bg-white" tick="stroke-[#444]" />
              <label htmlFor="changes" className="pt-0.5">Assume changes</label>
            </span>
            <span className="flex items-center gap-1.5">
              <CheckBox id="deletions" box="border-[#333] bg-white" tick="stroke-[#444]" />
              <label htmlFor="deletions" className="pt-0.5">Assume deletions</label>
            </span>
          </div>
          <ArticleTable />
          <div className="mt-[7px] flex justify-end gap-2 pr-px">
            <button className="h-[21px] w-[98px] border border-[#a8a8a8] bg-[#e1e1e1] pt-0.5">Import</button>
            <button className="h-[21px] w-[98px] border border-[#a8a8a8] bg-[#e1e1e1] pt-0.5">Abort</button>
          </div>
          <svg width="8" height="8" viewBox="0 0 8 8" fill="#bcbcbc" className="absolute right-0.5 bottom-0.5">
            <path d="M6 0h2v2H6zM3 3h2v2H3zM6 3h2v2H6zM0 6h2v2H0zM3 6h2v2H3zM6 6h2v2H6z" />
          </svg>
        </div>
      </div>
    </div>
  );
};

export default function App() {
  return (
    <div className="relative flex min-h-screen flex-col bg-[#f7f7f7] font-['Tahoma','DejaVu_Sans_Condensed','Noto_Sans',sans-serif] text-[11px] leading-[14px]">
      <Patterns />
      <Header />
      <Ribbon />
      <main className="mt-px flex flex-1 pl-0.5">
        <Sidebar />
        <Grid />
      </main>
      <footer className="flex h-[29px] shrink-0 items-start pl-0.5">
        <button className="h-[26px] w-[111px] border-r border-b-2 border-r-[#cfcfcf] border-b-[#a5a5a5] bg-[#f7f7f7] pt-[3px] text-[#404040]">
          Article [0 / 14363]
        </button>
        <div className="mr-0.5 flex h-5 flex-1 items-end justify-end border-t border-[#cfcfcf] pr-1.5 pb-1">
          <button aria-label="Window list">
            <svg width="6" height="3" viewBox="0 0 6 3" fill="#666"><path d="M0 0h6L3 3z" /></svg>
          </button>
        </div>
      </footer>
      <ImportDialog />
    </div>
  );
}
